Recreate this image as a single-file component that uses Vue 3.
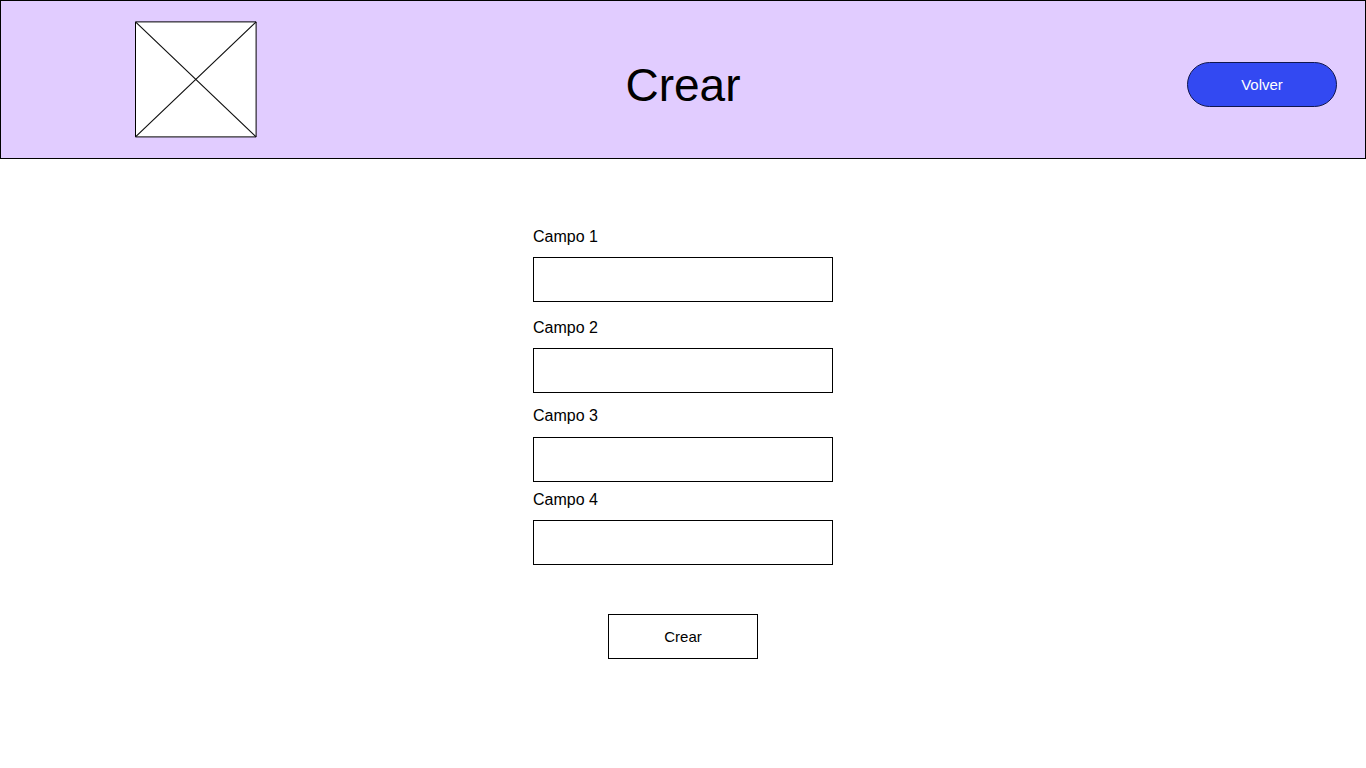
<script setup>
import { ref } from 'vue'

const fields = ref([
  { id: 'campo-1', label: 'Campo 1', value: '' },
  { id: 'campo-2', label: 'Campo 2', value: '' },
  { id: 'campo-3', label: 'Campo 3', value: '' },
  { id: 'campo-4', label: 'Campo 4', value: '' },
])
</script>

<template>
  <div class="page">
    <header class="header">
      <svg class="logo" width="122" height="117" viewBox="0 0 122 117" aria-hidden="true">
        <path class="logo-box" d="M.5 .9H121.1V115.9H.5Z" />
        <path class="logo-lines" d="M.5 .9L121.1 115.9M121.1 .9L.5 115.9" />
      </svg>
      <h1 class="title">Crear</h1>
      <button class="back" type="button">Volver</button>
    </header>

    <main class="main">
      <form class="form" @submit.prevent>
        <div v-for="field in fields" :key="field.id" class="field">
          <label class="label" :for="field.id">{{ field.label }}</label>
          <input :id="field.id" v-model="field.value" class="input" type="text" />
        </div>
        <button class="submit" type="submit">Crear</button>
      </form>
    </main>
  </div>
</template>

<style>
body {
  margin: 0;
  background: #fff;
}
</style>

<style scoped>
.page {
  font-family: "Liberation Sans", Arial, sans-serif;
  color: #000;
}

.header {
  box-sizing: border-box;
  display: grid;
  grid-template-columns: 1fr auto 1fr;
  align-items: center;
  padding: 20px 28px;
  border: 1px solid #000;
  background: #e1ccff;
}

.logo {
  display: block;
  margin-left: 106px;
}

.logo-box {
  fill: #fff;
  stroke: #000;
}

.logo-lines {
  fill: none;
  stroke: #111;
  stroke-width: 1.2;
}

.title {
  margin: 10px 0 0;
  font-size: 46px;
  font-weight: 400;
  line-height: 52px;
}

.back,
.submit {
  box-sizing: border-box;
  width: 150px;
  height: 45px;
  padding: 0;
  border: 1px solid #000;
  font-family: inherit;
  font-size: 15px;
  cursor: pointer;
}

.back {
  justify-self: end;
  margin-top: 10px;
  border-color: #10164d;
  border-radius: 23px;
  background: #3349f2;
  color: #fff;
}

.main {
  display: flex;
  justify-content: center;
  padding: 69px 16px 48px;
}

.form {
  display: flex;
  flex-direction: column;
  width: 300px;
}

.field {
  display: flex;
  flex-direction: column;
  gap: 11px;
}

.field:nth-child(2) {
  margin-top: 17px;
}

.field:nth-child(3) {
  gap: 12px;
  margin-top: 14px;
}

.field:nth-child(4) {
  margin-top: 9px;
}

.label {
  font-size: 16px;
  line-height: 18px;
}

.input {
  box-sizing: border-box;
  width: 100%;
  height: 45px;
  padding: 0 12px;
  border: 1px solid #000;
  border-radius: 0;
  background: #fff;
  font-family: inherit;
  font-size: 16px;
}

.submit {
  align-self: center;
  margin-top: 49px;
  background: #fff;
  color: #000;
}
</style>
